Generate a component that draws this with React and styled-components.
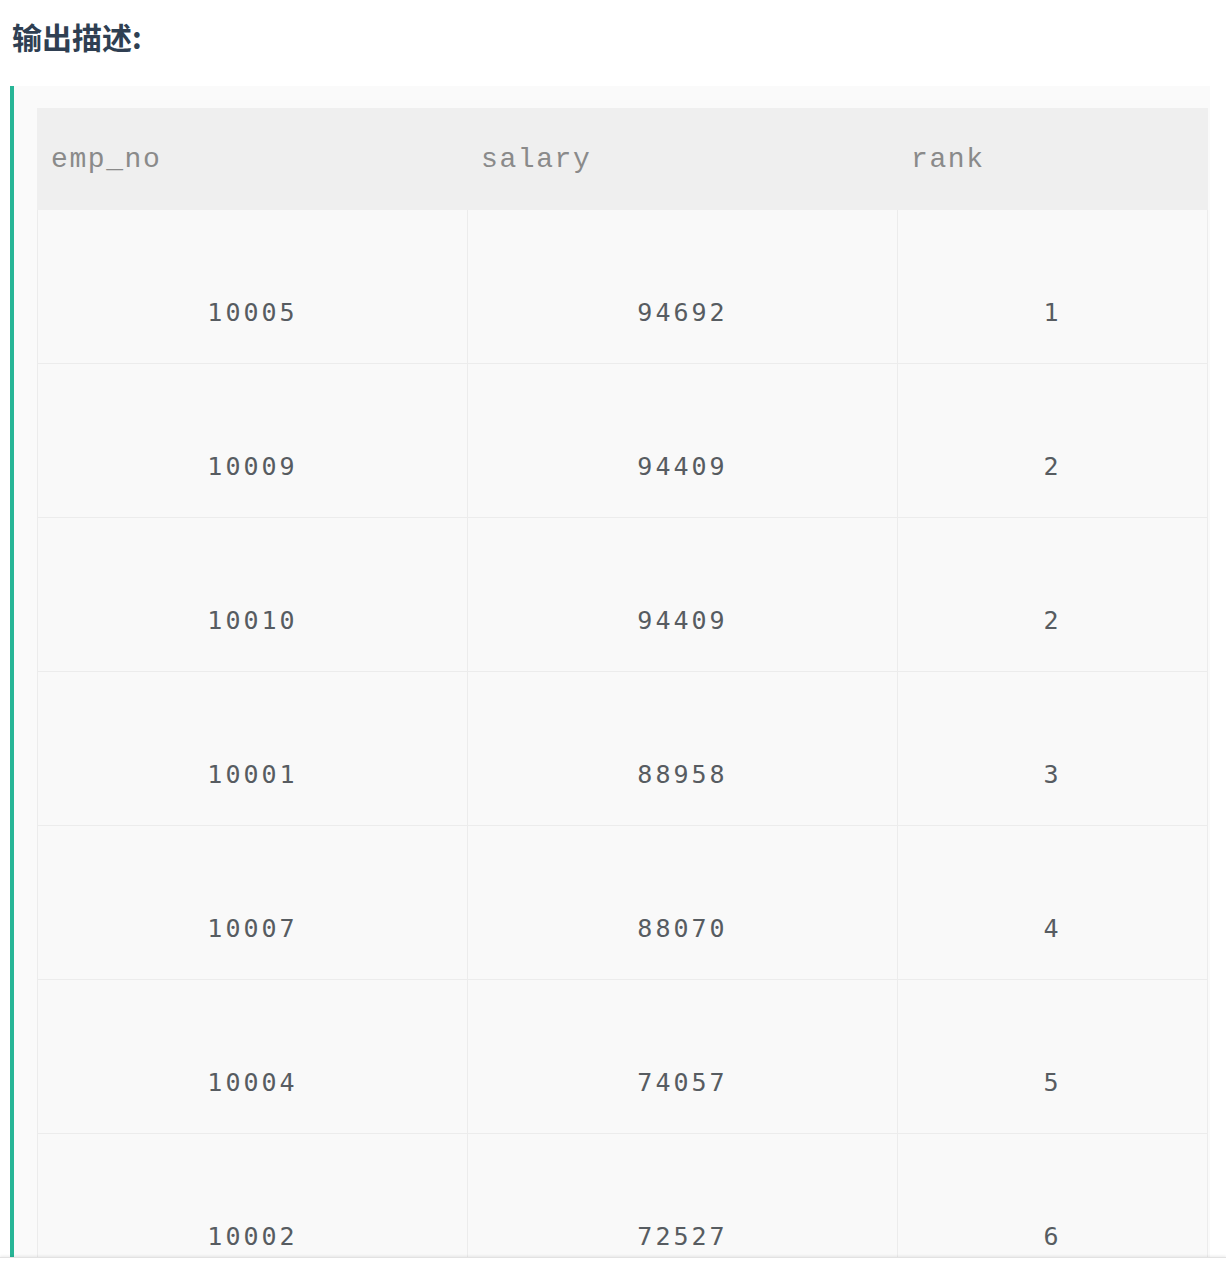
import React from "react";
import styled, { createGlobalStyle } from "styled-components";

const GlobalStyle = createGlobalStyle`
  html, body { margin: 0; padding: 0; background: #ffffff; }
  body { font-family: "Noto Sans", "Noto Sans CJK SC", sans-serif; }
`;

const Page = styled.div`
  padding: 12px 16px 40px 10px;
`;

const Title = styled.h3`
  margin: 0 0 26px 2px;
  font-family: "Noto Sans CJK SC", "Noto Sans", sans-serif;
  font-size: 30px;
  line-height: 48px;
  font-weight: 700;
  color: #2f3f52;
`;

const Quote = styled.div`
  width: 1200px;
  border-left: 4px solid #27b596;
  background: #fafafa;
  padding: 22px 3px 0 23px;
  box-sizing: border-box;
`;

const Table = styled.table`
  width: 1170px;
  table-layout: fixed;
  border-collapse: collapse;
`;

const HeadCell = styled.th`
  height: 101px;
  padding: 0 13px;
  background: #efefef;
  border: 1px solid #efefef;
  text-align: left;
  font-family: "Liberation Mono", "Courier New", monospace;
  font-weight: 400;
  font-size: 28px;
  letter-spacing: 1.6px;
  color: #8a8a8a;
  box-sizing: border-box;
`;

const Cell = styled.td`
  height: 154px;
  padding: 0 0 32px 0;
  box-sizing: border-box;
  vertical-align: bottom;
  text-align: center;
  border: 1px solid #ececec;
  background: #f9f9f9;
  font-family: "DejaVu Sans Mono", "Liberation Mono", monospace;
  font-size: 25px;
  line-height: 36px;
  letter-spacing: 3px;
  color: #575c61;
`;

const FooterEdge = styled.div`
  position: fixed;
  left: 0;
  right: 0;
  bottom: 0;
  height: 6px;
  background: #ffffff;
  border-top: 1px solid #e2e2e2;
  box-shadow: 0 -1px 3px rgba(0, 0, 0, 0.08);
`;

const rows = [
  ["10005", "94692", "1"],
  ["10009", "94409", "2"],
  ["10010", "94409", "2"],
  ["10001", "88958", "3"],
  ["10007", "88070", "4"],
  ["10004", "74057", "5"],
  ["10002", "72527", "6"],
];

export default function App() {
  return (
    <>
      <GlobalStyle />
      <Page>
        <Title>输出描述:</Title>
        <Quote>
          <Table>
            <colgroup>
              <col style={{ width: 430 }} />
              <col style={{ width: 430 }} />
              <col style={{ width: 310 }} />
            </colgroup>
            <thead>
              <tr>
                <HeadCell>emp_no</HeadCell>
                <HeadCell>salary</HeadCell>
                <HeadCell>rank</HeadCell>
              </tr>
            </thead>
            <tbody>
              {rows.map((r) => (
                <tr key={r[0]}>
                  {r.map((v, i) => (
                    <Cell key={i}>{v}</Cell>
                  ))}
                </tr>
              ))}
            </tbody>
          </Table>
        </Quote>
      </Page>
      <FooterEdge />
    </>
  );
}
